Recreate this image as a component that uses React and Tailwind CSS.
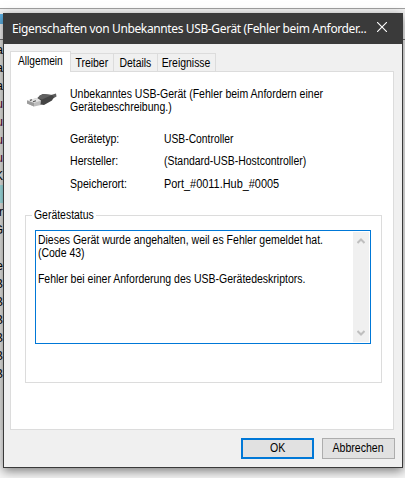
import clsx from "clsx";

const TABS = [
  { label: "Treiber", width: "w-[43px]", text: "scale-x-[0.87]" },
  { label: "Details", width: "w-[44px]", text: "scale-x-[0.87]" },
  { label: "Ereignisse", width: "w-[58px]", text: "scale-x-[0.87]" },
];

const INFO = [
  { label: "Gerätetyp:", value: "USB-Controller", height: "h-[22px]", text: "scale-x-[0.86]" },
  { label: "Hersteller:", value: "(Standard-USB-Hostcontroller)", height: "h-[23px]", text: "scale-x-[0.87]" },
  { label: "Speicherort:", value: "Port_#0011.Hub_#0005", height: "h-[22px]", text: "scale-x-[0.91]" },
];

// Rows of the device manager that stick out left of the dialog
const BACKGROUND_ROWS = ["a", "a", "a", "u", "u", "u", "u", "K", "", "r", "G", "", "e", "B", "B", "B", "B", "B", "B"];

export default function App() {
  return (
    <div className="relative h-[478px] w-[405px] overflow-hidden bg-[#f6f6f6] font-['Liberation_Sans',Arial,sans-serif] text-[12px] leading-[13px] text-black">
      <DeviceManager />
      <Dialog />
    </div>
  );
}

function DeviceManager() {
  return (
    <div className="absolute inset-0">
      <div className="h-2 bg-white"></div>
      <div className="h-px bg-[#a0a0a0]"></div>
      <div className="h-[5px] bg-[#f2f2f2]"></div>
      <div className="h-[10px] w-[3px] bg-[#5fb2e4]"></div>
      <div className="mt-[15px] h-px bg-[#777]"></div>
      <div className="flex h-[390px] w-[3px] flex-col overflow-hidden bg-[#e9e9e6] pt-px">
        {BACKGROUND_ROWS.map((letter, i) => (
          <div
            key={i}
            className={clsx(
              "flex h-[18px] w-[3px] shrink-0 items-center justify-end",
              i >= 3 && i <= 6 ? "text-[#500030]" : "text-black",
              i === 8 && "bg-[#a5e6ea]"
            )}
          >
            {letter}
          </div>
        ))}
      </div>
    </div>
  );
}

function Dialog() {
  return (
    <div className="absolute left-[3px] top-[13px] flex h-[455px] w-[400px] flex-col border border-t-0 border-[#3a3a3a] bg-[#f0f0f0] shadow-[0_3px_10px_rgba(0,0,0,0.5)]">
      <div className="flex h-[31px] shrink-0 items-center bg-[#3a3a3a] text-white">
        <h1 className="ml-2 w-[362px] whitespace-nowrap font-['Noto_Sans','Open_Sans',sans-serif] text-[12px] leading-[16px] tracking-[-0.37px]">
          Eigenschaften von Unbekanntes USB-Gerät (Fehler beim Anforder...
        </h1>
        <button aria-label="Schließen" className="ml-[3px] -mt-1">
          <svg width="10" height="10" viewBox="0 0 10 10" stroke="white" strokeWidth="1.1">
            <path d="M0 0L10 10M10 0L0 10" />
          </svg>
        </button>
      </div>

      <div className="mx-1.5 mt-[7px] flex h-[20px] shrink-0 items-end">
        <div className="z-10 -mb-px flex h-[21px] w-[61px] justify-center border border-b-0 border-[#dcdcdc] bg-white pt-[3px] pr-px">
          <span className="scale-x-[0.85]">Allgemein</span>
        </div>
        {TABS.map((tab) => (
          <div
            key={tab.label}
            className={clsx("flex h-[18px] items-center justify-center border-r border-t border-[#dcdcdc] pt-[2px]", tab.width)}
          >
            <span className={tab.text}>{tab.label}</span>
          </div>
        ))}
      </div>

      <div className="ml-1.5 flex h-[359px] w-[384px] shrink-0 flex-col border border-[#dcdcdc] bg-white">
        <div className="mt-4 flex h-[45px]">
          <div className="mt-[5px] w-[59px] pl-[15px]">
            <UsbPlug />
          </div>
          <p className="w-[300px] origin-left scale-x-[0.876] whitespace-nowrap">
            Unbekanntes USB-Gerät (Fehler beim Anfordern einer
            <br />
            Gerätebeschreibung.)
          </p>
        </div>
        <dl className="ml-[59px] whitespace-nowrap">
          {INFO.map((row) => (
            <div key={row.label} className={clsx("flex", row.height)}>
              <dt className="w-[94px] origin-left scale-x-[0.88]">{row.label}</dt>
              <dd className={clsx("origin-left", row.text)}>{row.value}</dd>
            </div>
          ))}
        </dl>
        <Status />
      </div>

      <div className="mt-2 flex justify-end gap-2 pr-[7px]">
        <button className="h-[21px] w-[73px] border-2 border-[#0078d7] bg-[#e1e1e1]">
          <span className="inline-block scale-x-[0.88]">OK</span>
        </button>
        <button className="h-[21px] w-[73px] border border-[#adadad] bg-[#e1e1e1]">
          <span className="inline-block scale-x-[0.88]">Abbrechen</span>
        </button>
      </div>
    </div>
  );
}

function Status() {
  return (
    <section className="ml-3.5 mt-[15px] h-[168px] w-[357px] border border-[#dcdcdc]">
      <h2 className="-mt-[7px] ml-[6px] h-[14px] w-[64px] bg-white px-[2px]">
        <span className="inline-block origin-left scale-x-[0.87]">Gerätestatus</span>
      </h2>
      <div className="ml-[9px] mt-[7px] flex h-[114px] w-[336px] border border-[#0078d7] p-px">
        <div className="w-[316px]">
          <p className="w-fit origin-left scale-x-[0.876] whitespace-nowrap pl-px pt-[2px]">
            Dieses Gerät wurde angehalten, weil es Fehler gemeldet hat.
            <br />
            (Code 43)
            <br />
            <br />
            Fehler bei einer Anforderung des USB-Gerätedeskriptors.
          </p>
        </div>
        <div className="flex w-4 shrink-0 flex-col items-center justify-between bg-[#f0f0f0] py-[6px]">
          <Chevron />
          <Chevron down />
        </div>
      </div>
    </section>
  );
}

function Chevron({ down }) {
  return (
    <svg width="8" height="6" viewBox="0 0 8 6" fill="none" stroke="#bfbfbf" strokeWidth="2" className={clsx(down && "rotate-180")}>
      <path d="M0.5 5L4 1.5L7.5 5" />
    </svg>
  );
}

function UsbPlug() {
  return (
    <svg width="32" height="16" viewBox="0 0 32 16">
      <path d="M25 2L30 0.5L30.5 3.5L27 5.5Z" fill="#5d5d5d" />
      <path d="M1 7.5L11 5L17 8L15 12L8 13.5L1 10.5Z" fill="#bdbdbd" />
      <path d="M1 7.5L11 5L15 7.5L8 10Z" fill="#e4e4e4" />
      <path d="M1 7.5L8 10V13.5L1 10.5Z" fill="#9c9c9c" />
      <path d="M4 7.4L6 6.8M7 8.8L10 7.8" stroke="#555" strokeWidth="1.2" />
      <path d="M11.5 5L14 2.5L17 1L26 2L28 4L26 7.5L18 12L14.5 11.5L15 7.5Z" fill="#444" />
      <path d="M11.5 5L14 2.5L17 1L26 2L16 6.5Z" fill="#606060" />
    </svg>
  );
}
